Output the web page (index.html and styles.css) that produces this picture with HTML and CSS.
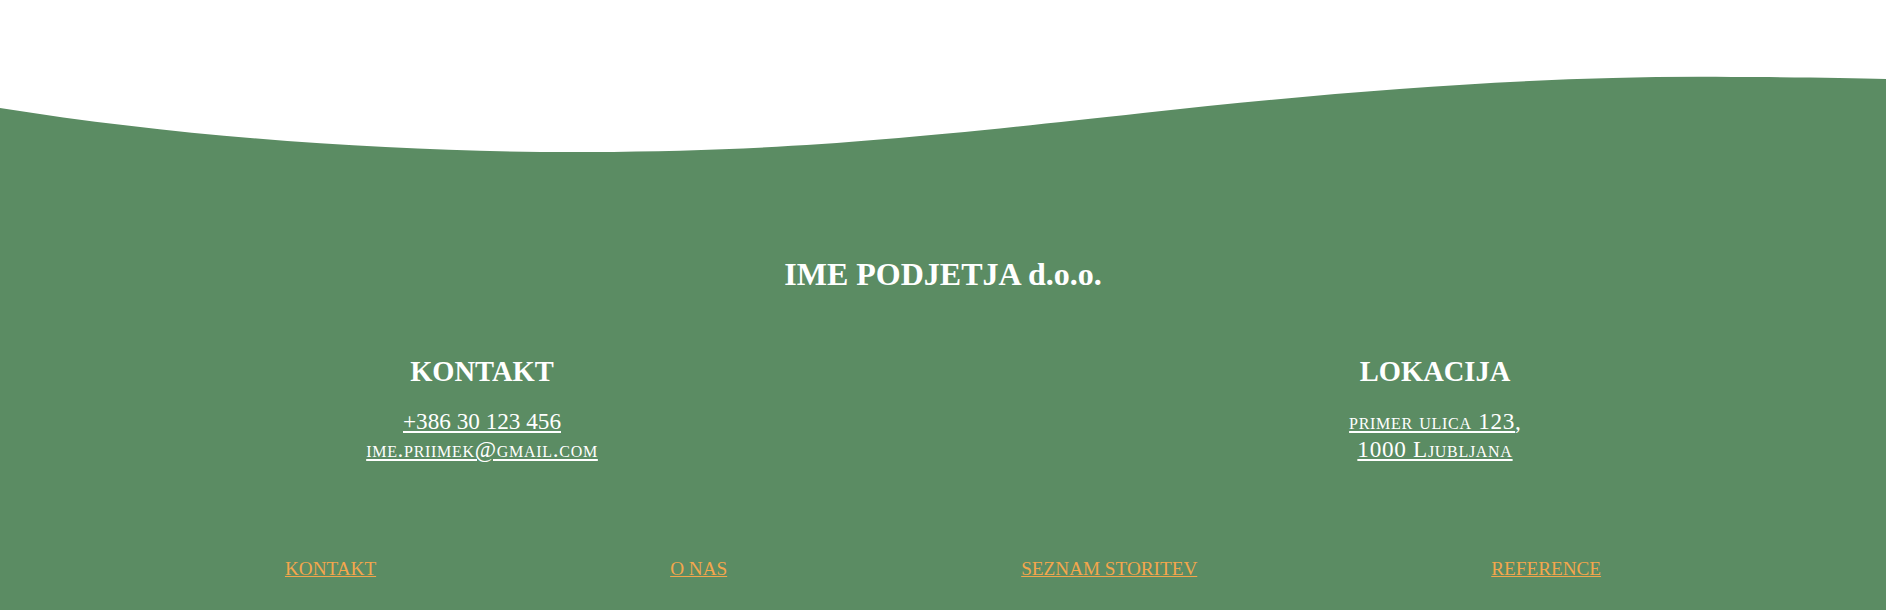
FILE: index.html
```html
<!DOCTYPE html>
<html lang="sl">
<head>
<meta charset="utf-8">
<title>IME PODJETJA d.o.o.</title>
<link rel="stylesheet" href="styles.css">
</head>
<body>
<footer class="footer">
  <svg class="wave" viewBox="0 0 1886 160" preserveAspectRatio="none" aria-hidden="true">
    <path d="M0,108 C200,140 420,153 590,152 C780,151 900,140 1143,113 C1350,90 1550,75 1732,77 C1800,77 1850,78 1886,79 L1886,160 L0,160 Z" fill="#5b8c63"/>
  </svg>
  <div class="content">
    <h1 class="company">IME PODJETJA d.o.o.</h1>
    <div class="columns">
      <section class="col">
        <h2 class="col-title">KONTAKT</h2>
        <p class="col-text"><a href="#">+386 30 123 456</a><br><a href="#" class="sc">ime.priimek@gmail.com</a></p>
      </section>
      <section class="col">
        <h2 class="col-title">LOKACIJA</h2>
        <p class="col-text"><a href="#" class="sc">primer ulica 123</a>,<br><a href="#" class="sc">1000 Ljubljana</a></p>
      </section>
    </div>
    <nav class="nav">
      <a href="#">KONTAKT</a>
      <a href="#">O NAS</a>
      <a href="#">SEZNAM STORITEV</a>
      <a href="#">REFERENCE</a>
    </nav>
  </div>
</footer>
</body>
</html>
```

FILE: styles.css
```css
html, body {
  margin: 0;
  padding: 0;
  background: #ffffff;
}

body {
  font-family: "Liberation Serif", "Times New Roman", serif;
  line-height: 1.2;
  color: #ffffff;
}

.wave {
  display: block;
  width: 100%;
  height: 160px;
}

.content {
  background: #5b8c63;
  padding: 95px 0 0;
  height: 450px;
  box-sizing: border-box;
}

.company {
  margin: 0;
  text-align: center;
  font-size: 32px;
  font-weight: bold;
}

.columns {
  display: flex;
  justify-content: center;
  gap: 553px;
  padding-left: 31px;
  margin-top: 62px;
}

.col {
  width: 400px;
  text-align: center;
}

.col-title {
  margin: 0 0 17px;
  font-size: 28.5px;
  font-weight: bold;
}

.col-text {
  margin: 0;
  font-size: 23.2px;
  line-height: 28.5px;
}

.col-text a {
  color: #ffffff;
  text-decoration: underline;
}

.sc {
  font-variant: small-caps;
  letter-spacing: 0.7px;
}

.nav {
  display: flex;
  justify-content: center;
  gap: 294px;
  margin-top: 93px;
}

.nav a {
  color: #f4a64c;
  font-size: 19.2px;
  text-decoration: underline;
}
```
